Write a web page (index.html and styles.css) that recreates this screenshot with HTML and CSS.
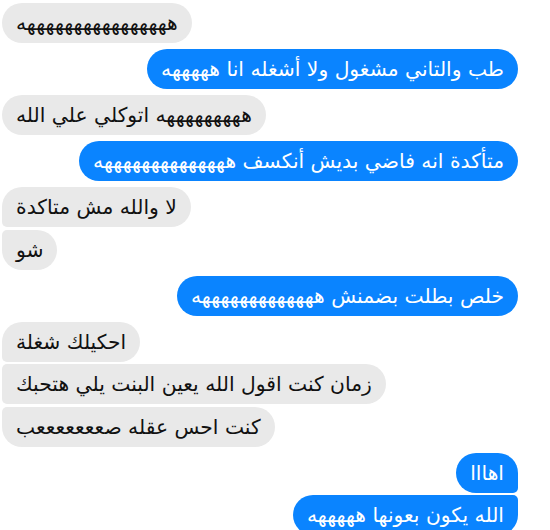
FILE: index.html
```html
<!DOCTYPE html>
<html lang="ar">
<head>
    <meta charset="UTF-8">
    <meta name="viewport" content="width=device-width, initial-scale=1.0">
    <title>Chat</title>
    <link rel="stylesheet" href="styles.css">
</head>
<body>
    <div class="thread">
        <div class="msg in single">ههههههههههههههههه</div>
        <div class="msg out single gap">طب والتاني مشغول ولا أشغله انا هههههه</div>
        <div class="msg in single gap">هههههههههه اتوكلي علي الله</div>
        <div class="msg out single gap">متأكدة انه فاضي بديش أنكسف ههههههههههههههه</div>

        <div class="msg in first gap">لا والله مش متاكدة</div>
        <div class="msg in last">شو</div>

        <div class="msg out single gap">خلص بطلت بضمنش هههههههههههههه</div>

        <div class="msg in first gap">احكيلك شغلة</div>
        <div class="msg in middle">زمان كنت اقول الله يعين البنت يلي هتحبك</div>
        <div class="msg in last">كنت احس عقله صعععععععب</div>

        <div class="msg out first gap">اهااا</div>
        <div class="msg out last">الله يكون بعونها هههههه</div>
    </div>
</body>
</html>
```

FILE: styles.css
```css
/* Page */
body {
    margin: 0;
    padding: 0;
    background-color: #ffffff;
    font-family: "DejaVu Sans", sans-serif;
    overflow: hidden;
}

/* Message list */
.thread {
    display: flex;
    flex-direction: column;
    padding: 3px 32px 0 2px;
    gap: 2.5px;
}

.msg {
    direction: rtl;
    height: 40px;
    line-height: 40px;
    padding: 0 14px;
    font-size: 20.3px;
    white-space: nowrap;
    box-sizing: border-box;
    border-radius: 20px;
}

.gap {
    margin-top: 3.5px;
}

/* Incoming (grey, left) */
.msg.in {
    align-self: flex-start;
    background-color: #e9e9e9;
    color: #111111;
}

.msg.in.first {
    border-bottom-left-radius: 5px;
}

.msg.in.middle {
    border-top-left-radius: 5px;
    border-bottom-left-radius: 5px;
}

.msg.in.last {
    border-top-left-radius: 5px;
}

/* Outgoing (blue, right) */
.msg.out {
    align-self: flex-end;
    background-color: #0a84ff;
    color: #ffffff;
}

.msg.out.first {
    border-bottom-right-radius: 5px;
}

.msg.out.last {
    border-top-right-radius: 5px;
}
```
